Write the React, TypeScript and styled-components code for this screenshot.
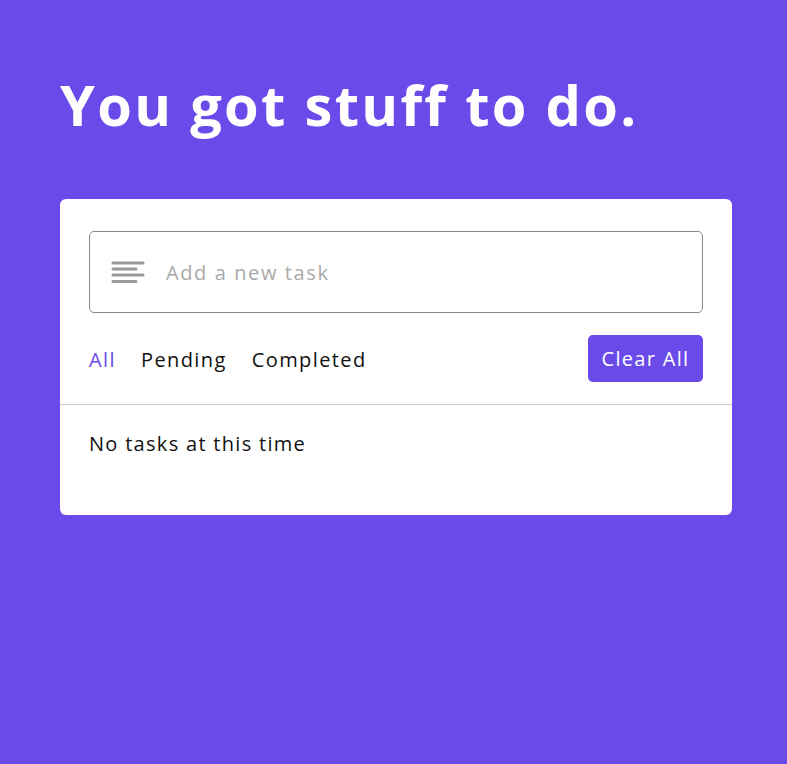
import React from "react";
import styled, { createGlobalStyle } from "styled-components";

const Global = createGlobalStyle`
  html, body { margin: 0; padding: 0; background: #6a4ae8; }
  body { font-family: "Open Sans", "Noto Sans", sans-serif; }
  * { box-sizing: border-box; }
`;

const Page = styled.div`
  min-height: 764px;
  background: #6a4ae8;
  padding: 62px 55px 0 60px;
  display: flex;
  flex-direction: column;
`;

const Title = styled.h1`
  margin: 0;
  color: #fff;
  font-family: "Open Sans", sans-serif;
  font-weight: 700;
  font-size: 56px;
  line-height: 84px;
  letter-spacing: 2.3px;
`;

const Card = styled.div`
  margin-top: 53px;
  background: #fff;
  border-radius: 6px;
  padding-bottom: 58px;
`;

const Top = styled.div`
  padding: 32px 29px 0 29px;
`;

const InputBox = styled.label`
  display: flex;
  align-items: center;
  height: 82px;
  border: 1px solid #8a8a8a;
  border-radius: 5px;
  padding: 0 20px 0 21px;
  gap: 21px;
`;

const Input = styled.input`
  flex: 1;
  border: none;
  outline: none;
  font-family: "Open Sans", sans-serif;
  font-size: 20px;
  letter-spacing: 1.6px;
  color: #333;
  background: transparent;
  padding: 0;
  &::placeholder { color: #a9a9a9; }
`;

const Controls = styled.div`
  display: flex;
  align-items: center;
  justify-content: space-between;
  height: 91px;
`;

const Filters = styled.div`
  display: flex;
  gap: 25px;
  padding-top: 2px;
`;

const Filter = styled.span<{ $active?: boolean }>`
  font-size: 20px;
  letter-spacing: 1.4px;
  color: ${(p) => (p.$active ? "#6a4ae8" : "#111")};
  cursor: pointer;
`;

const ClearBtn = styled.button`
  width: 115px;
  height: 47px;
  background: #6a4ae8;
  color: #fff;
  border: none;
  border-radius: 5px;
  font-family: "Open Sans", sans-serif;
  font-size: 20px;
  letter-spacing: 1.3px;
  padding: 0;
  cursor: pointer;
`;

const Divider = styled.div`
  height: 1px;
  background: #c8c8c8;
`;

const Empty = styled.p`
  margin: 26px 29px 0;
  font-size: 20px;
  letter-spacing: 1.3px;
  color: #111;
  line-height: 26px;
`;

const MenuIcon = () => (
  <svg width="34" height="24" viewBox="0 0 34 24">
    <g stroke="#999" strokeWidth="3" strokeLinecap="round">
      <line x1="2" y1="3" x2="32" y2="3" />
      <line x1="2" y1="9" x2="25" y2="9" />
      <line x1="2" y1="15" x2="32" y2="15" />
      <line x1="2" y1="21.5" x2="25" y2="21.5" />
    </g>
  </svg>
);

export default function App() {
  return (
    <>
      <Global />
      <Page>
        <Title>You got stuff to do.</Title>
        <Card>
          <Top>
            <InputBox>
              <MenuIcon />
              <Input placeholder="Add a new task" />
            </InputBox>
            <Controls>
              <Filters>
                <Filter $active>All</Filter>
                <Filter>Pending</Filter>
                <Filter>Completed</Filter>
              </Filters>
              <ClearBtn>Clear All</ClearBtn>
            </Controls>
          </Top>
          <Divider />
          <Empty>No tasks at this time</Empty>
        </Card>
      </Page>
    </>
  );
}
